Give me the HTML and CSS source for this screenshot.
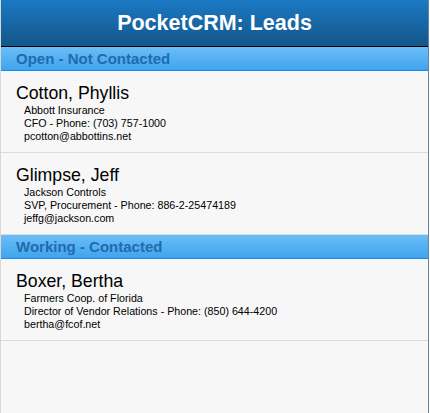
FILE: index.html
```html
<!DOCTYPE html>
<html>
<head>
<meta charset="utf-8">
<link rel="stylesheet" href="styles.css">
</head>
<body>
<div class="app">
  <header class="topbar"><h1 class="title">PocketCRM: Leads</h1></header>
  <div class="list">
    <div class="divider">Open - Not Contacted</div>
    <div class="lead">
      <div class="name">Cotton, Phyllis</div>
      <div class="info">Abbott Insurance</div>
      <div class="info">CFO - Phone: (703) 757-1000</div>
      <div class="info">pcotton@abbottins.net</div>
    </div>
    <div class="lead">
      <div class="name">Glimpse, Jeff</div>
      <div class="info">Jackson Controls</div>
      <div class="info">SVP, Procurement - Phone: 886-2-25474189</div>
      <div class="info">jeffg@jackson.com</div>
    </div>
    <div class="divider">Working - Contacted</div>
    <div class="lead">
      <div class="name">Boxer, Bertha</div>
      <div class="info">Farmers Coop. of Florida</div>
      <div class="info">Director of Vendor Relations - Phone: (850) 644-4200</div>
      <div class="info">bertha@fcof.net</div>
    </div>
  </div>
</div>
</body>
</html>
```
FILE: styles.css
```css
html, body {
  margin: 0;
  padding: 0;
  background: #ffffff;
}
body {
  font-family: "Liberation Sans", Arial, sans-serif;
  width: 430px;
  height: 413px;
  overflow: hidden;
}
.app {
  width: 427px;
  height: 413px;
  border-left: 1px solid #d8d8d8;
  border-right: 1px solid #6e7f98;
  background: #f7f7f7;
  display: flex;
  flex-direction: column;
}
.topbar {
  height: 46px;
  background: linear-gradient(#1b79c4, #145689);
  border-bottom: 1px solid #000;
  display: flex;
  align-items: center;
  justify-content: center;
}
.title {
  margin: 0;
  color: #fff;
  font-size: 21.5px;
  font-weight: bold;
}
.divider {
  height: 23px;
  line-height: 24px;
  padding-left: 15px;
  background: linear-gradient(#6dbdf6, #3fa4ef);
  border-bottom: 1px solid #1a8ae8;
  color: #1e6cad;
  font-weight: bold;
  font-size: 15px;
}
.lead {
  height: 82px;
  box-sizing: border-box;
  padding: 12px 0 0 15px;
  border-bottom: 1px solid #dcdcdc;
  color: #000;
}
.name {
  font-size: 17.7px;
  line-height: 20px;
  margin-bottom: 1px;
}
.info {
  font-size: 10.7px;
  line-height: 13px;
  padding-left: 8px;
}
```
